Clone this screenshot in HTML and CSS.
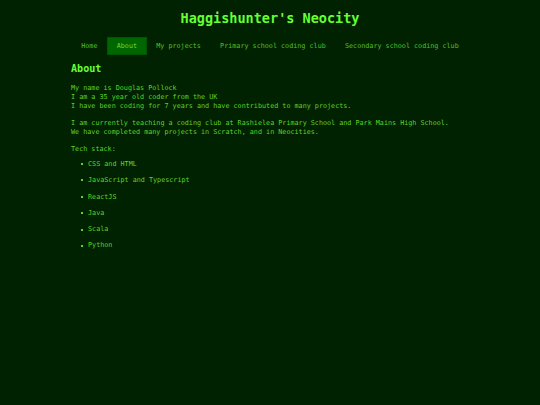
FILE: index.html
```html
<!DOCTYPE html>
<html lang="en">
<head>
<meta charset="utf-8">
<title>Haggishunter's Neocity</title>
<link rel="stylesheet" href="styles.css">
</head>
<body>
<header class="site-header">
  <h1 class="site-title">Haggishunter's Neocity</h1>
  <nav class="nav">
    <a class="nav-link" href="#">Home</a>
    <a class="nav-link active" href="#">About</a>
    <a class="nav-link" href="#">My projects</a>
    <a class="nav-link" href="#">Primary school coding club</a>
    <a class="nav-link" href="#">Secondary school coding club</a>
  </nav>
</header>
<main class="content">
  <h2 class="section-title">About</h2>
  <p class="text">My name is Douglas Pollock<br>I am a 35 year old coder from the UK<br>I have been coding for 7 years and have contributed to many projects.</p>
  <p class="text">I am currently teaching a coding club at Rashielea Primary School and Park Mains High School.<br>We have completed many projects in Scratch, and in Neocities.</p>
  <p class="text stack-label">Tech stack:</p>
  <ul class="stack">
    <li>CSS and HTML</li>
    <li>JavaScript and Typescript</li>
    <li>ReactJS</li>
    <li>Java</li>
    <li>Scala</li>
    <li>Python</li>
  </ul>
</main>
</body>
</html>
```
FILE: styles.css
```css
html, body {
  margin: 0;
  padding: 0;
  background: #002200;
  min-height: 100%;
}
body {
  font-family: "DejaVu Sans Mono", monospace;
  font-size: 6.75px;
  line-height: 9px;
  color: #5fd32a;
}
.site-header {
  display: flex;
  flex-direction: column;
  align-items: center;
}
.site-title {
  font-size: 13.5px;
  line-height: 16px;
  font-weight: bold;
  color: #66ff33;
  margin: 10px 0 11px;
}
.nav {
  display: flex;
  justify-content: center;
}
.nav-link {
  display: block;
  padding: 4.5px 9.6px;
  color: #52c02c;
  text-decoration: none;
}
.nav-link.active {
  background: #006600;
  box-shadow: inset 0 0 0 1px #005500;
  color: #66dd33;
}
.content {
  width: 398px;
  margin: 0 auto;
}
.section-title {
  font-size: 10.1px;
  line-height: 12px;
  font-weight: bold;
  color: #66ff33;
  margin: 8px 0 8.5px;
}
.text {
  margin: 0 0 8px;
}
.stack-label {
  margin-bottom: 6px;
}
.stack {
  margin: 0;
  padding: 0 0 0 17px;
  list-style: none;
}
.stack li {
  position: relative;
  margin-bottom: 7.3px;
}
.stack li + li {
  margin-top: 0;
}
.stack li:nth-child(2) {
  padding-top: 0.5px;
}
.stack li::before {
  content: "";
  position: absolute;
  left: -7px;
  top: 3.5px;
  width: 2px;
  height: 2px;
  background: #5fd32a;
}
```
